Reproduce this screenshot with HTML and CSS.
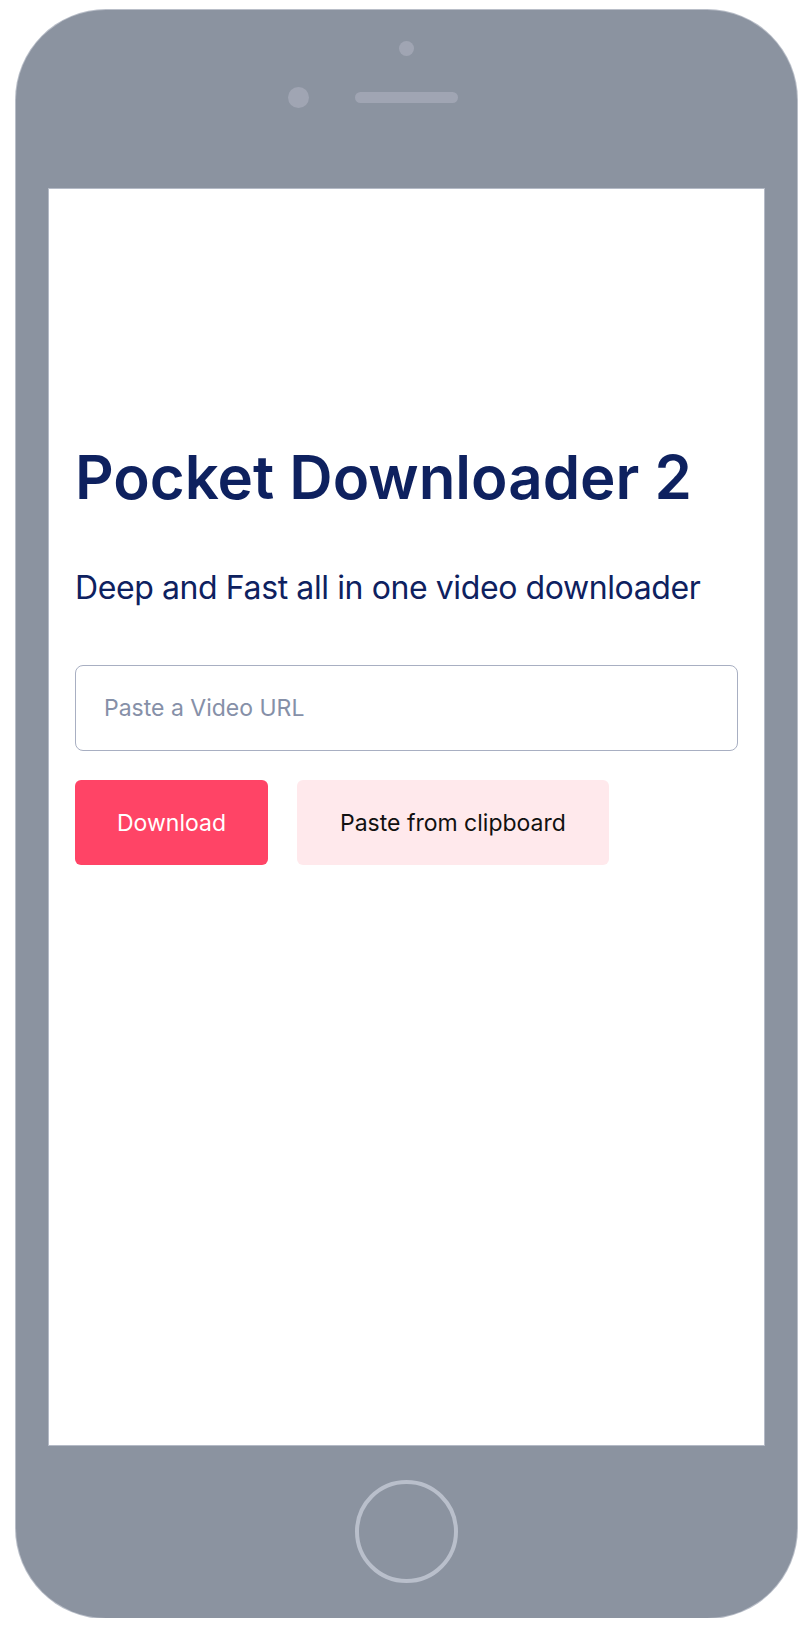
FILE: index.html
```html
<!DOCTYPE html>
<html lang="en">
<head>
<meta charset="utf-8">
<title>Pocket Downloader 2</title>
<link rel="stylesheet" href="styles.css">
</head>
<body>
  <div class="phone">
    <div class="bezel-top">
      <span class="sensor"></span>
      <div class="earpiece-row">
        <span class="camera"></span>
        <span class="speaker"></span>
        <span class="spacer"></span>
      </div>
    </div>
    <main class="screen">
      <h1 class="title">Pocket Downloader 2</h1>
      <p class="subtitle">Deep and Fast all in one video downloader</p>
      <input class="url-input" type="text" placeholder="Paste a Video URL">
      <div class="actions">
        <button class="btn btn-primary" type="button">Download</button>
        <button class="btn btn-soft" type="button">Paste from clipboard</button>
      </div>
    </main>
    <div class="bezel-bottom">
      <span class="home-button"></span>
    </div>
  </div>
</body>
</html>
```

FILE: styles.css
```css
html, body {
  margin: 0;
  background: #ffffff;
}

body {
  padding: 10px 0 0 16px;
  font-family: Inter, "Noto Sans", "Liberation Sans", sans-serif;
}

.phone {
  width: 781px;
  height: 1608px;
  background: #8b93a0;
  border-radius: 90px;
  display: flex;
  flex-direction: column;
  align-items: center;
  box-shadow: 0 0 0 1px #b9bec8;
}

.bezel-top {
  height: 179px;
  width: 100%;
  display: flex;
  flex-direction: column;
  align-items: center;
  padding-top: 31px;
  box-sizing: border-box;
}

.sensor {
  width: 15px;
  height: 15px;
  border-radius: 50%;
  background: #a0a5b3;
}

.earpiece-row {
  margin-top: 31px;
  width: 100%;
  display: grid;
  grid-template-columns: 1fr auto 1fr;
  align-items: center;
}

.camera {
  justify-self: end;
  margin-right: 46px;
  width: 21px;
  height: 21px;
  border-radius: 50%;
  background: #a0a5b3;
}

.speaker {
  width: 103px;
  height: 11px;
  border-radius: 6px;
  background: #a0a5b3;
}

.screen {
  width: 715px;
  height: 1256px;
  background: #ffffff;
  box-sizing: border-box;
  padding: 252px 26px 0;
  box-shadow: 0 0 0 1px #b4bac6;
}

.title {
  margin: 0;
  font-size: 60px;
  line-height: 1.2;
  font-weight: 600;
  color: #0e215f;
  letter-spacing: 0;
}

.subtitle {
  margin: 56px 0 0;
  font-size: 32px;
  line-height: 1.2;
  font-weight: 400;
  color: #0e215f;
  letter-spacing: -0.4px;
}

.url-input {
  display: block;
  margin-top: 58px;
  width: 100%;
  height: 86px;
  box-sizing: border-box;
  border: 1.5px solid #a8afc2;
  border-radius: 8px;
  padding: 0 28px;
  font-family: inherit;
  font-size: 23px;
  color: #0e215f;
  background: #ffffff;
  outline: none;
}

.url-input::placeholder {
  color: #8690a8;
}

.actions {
  display: flex;
  gap: 29px;
  margin-top: 29px;
}

.btn {
  height: 85px;
  border: none;
  border-radius: 6px;
  padding: 0 43px;
  font-family: inherit;
  font-size: 23px;
  font-weight: 400;
  cursor: pointer;
}

.btn-primary {
  padding: 0 42px;
  background: #ff4466;
  color: #ffffff;
}

.btn-soft {
  background: #ffe9ec;
  color: #111111;
}

.bezel-bottom {
  flex: 1;
  width: 100%;
  display: flex;
  align-items: center;
  justify-content: center;
}

.home-button {
  width: 103px;
  height: 103px;
  box-sizing: border-box;
  border-radius: 50%;
  border: 4px solid #b9bfcb;
}
```
